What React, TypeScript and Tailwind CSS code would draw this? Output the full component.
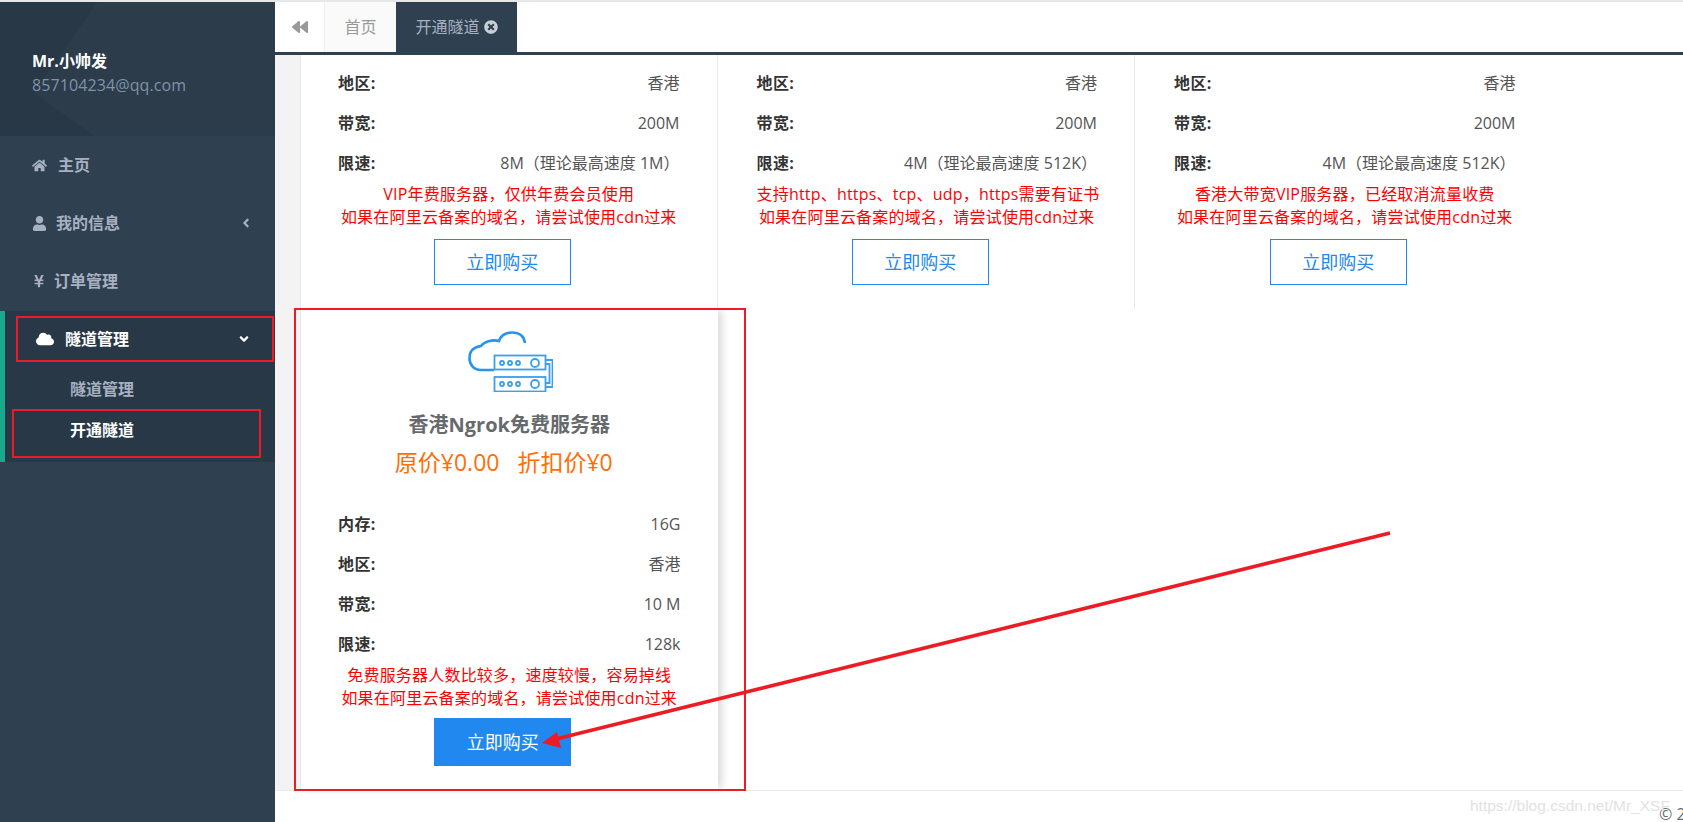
import React from "react";
import { FaHome, FaUser, FaYenSign, FaCloud, FaAngleLeft, FaAngleDown, FaBackward, FaTimesCircle } from "react-icons/fa";

type Plan = {
  rows: [string, string][];
  lines: [string, string];
};

const ALI = "如果在阿里云备案的域名，请尝试使用cdn过来";

const topPlans: Plan[] = [
  {
    rows: [["地区:", "香港"], ["带宽:", "200M"], ["限速:", "8M（理论最高速度 1M）"]],
    lines: ["VIP年费服务器，仅供年费会员使用", ALI],
  },
  {
    rows: [["地区:", "香港"], ["带宽:", "200M"], ["限速:", "4M（理论最高速度 512K）"]],
    lines: ["支持http、https、tcp、udp，https需要有证书", ALI],
  },
  {
    rows: [["地区:", "香港"], ["带宽:", "200M"], ["限速:", "4M（理论最高速度 512K）"]],
    lines: ["香港大带宽VIP服务器，已经取消流量收费", ALI],
  },
];

const freeRows: [string, string][] = [["内存:", "16G"], ["地区:", "香港"], ["带宽:", "10 M"], ["限速:", "128k"]];

const SpecRows = ({ rows }: { rows: [string, string][] }) => (
  <div className="flex flex-col">
    {rows.map(([label, value]) => (
      <div key={label} className="flex h-10 items-center justify-between">
        <span className="font-bold tracking-[0.4px] text-[#333]">{label}</span>
        <span className="text-[#555]">{value}</span>
      </div>
    ))}
  </div>
);

const Notes = ({ lines }: { lines: [string, string] }) => (
  <div className="text-center text-[16px] leading-[23px] tracking-[0.2px] text-[#ff0000] whitespace-nowrap">
    <p>{lines[0]}</p>
    <p>{lines[1]}</p>
  </div>
);

const CloudServer = () => (
  <svg viewBox="0 0 85 61" className="h-[61px] w-[85px]" fill="none" stroke="#2a93ea">
    <path d="M26 39H13C6 39 1.5 34 1.5 27C1.5 20 6 16 13 15C16 11 24 8 31 10C33 4 38 1.5 44 1.5C51 1.5 56 5 57 12" strokeWidth="2.6" />
    <g strokeWidth="1.8" stroke="#3a9fec">
      <rect x="26.5" y="24.5" width="51" height="14" />
      <rect x="26.5" y="46" width="51" height="14.5" />
      <circle cx="34" cy="32" r="2" />
      <circle cx="42" cy="32" r="2" />
      <circle cx="50" cy="32" r="2" />
      <circle cx="67" cy="32" r="4" />
      <circle cx="34" cy="53" r="2" />
      <circle cx="42" cy="53" r="2" />
      <circle cx="50" cy="53" r="2" />
      <circle cx="67" cy="53" r="4" />
      <path d="M78 29H84.5V56H78M78 33H81.5V52H78" />
    </g>
  </svg>
);

const MenuItem = ({ icon, label, gap, arrow }: { icon: React.ReactNode; label: string; gap: string; arrow?: boolean }) => (
  <div className="flex h-[58px] items-center pl-8 pr-[22px] font-bold text-[#a7b1c2]">
    <span className="flex items-center">{icon}</span>
    <span className={gap}>{label}</span>
    {arrow && <FaAngleLeft className="ml-auto text-[14px]" />}
  </div>
);

const Sidebar = () => (
  <aside className="flex w-[275px] shrink-0 flex-col bg-[#2f4050]">
    <div className="relative h-[134px] overflow-hidden bg-[#293846] pl-8 pt-[47px]">
      <div className="absolute -right-10 -top-10 h-[220px] w-[240px] rotate-[35deg] bg-[#2c3c4b]" />
      <p className="relative font-bold leading-6 text-white">Mr.小帅发</p>
      <p className="relative leading-6 tracking-[0.1px] text-[#7f93a9]">857104234@qq.com</p>
    </div>
    <MenuItem icon={<FaHome className="text-[15px]" />} label="主页" gap="ml-[11px]" />
    <MenuItem icon={<FaUser className="text-[15px]" />} label="我的信息" gap="ml-[9px]" arrow />
    <MenuItem icon={<FaYenSign className="text-[14px]" />} label="订单管理" gap="ml-[8px]" />
    <div className="mt-px h-[151px] border-l-[5px] border-[#19aa8d] bg-[#293846]">
      <div className="flex h-[56px] items-center pl-[31px] pr-[24px] font-bold text-white">
        <FaCloud className="text-[18px]" />
        <span className="ml-[11px]">隧道管理</span>
        <FaAngleDown className="ml-auto text-[14px]" />
      </div>
      <p className="mt-[2px] pl-[65px] font-bold leading-[40px] text-[#a7b1c2]">隧道管理</p>
      <p className="pl-[65px] pt-px font-bold leading-[40px] text-white">开通隧道</p>
    </div>
  </aside>
);

const TabBar = () => (
  <div className="flex h-[53px] shrink-0 border-b-[3px] border-[#2f4050] bg-white">
    <div className="flex w-[49px] items-center justify-center text-[#999]">
      <FaBackward className="text-[16px]" />
    </div>
    <div className="flex w-[72px] items-center justify-center border-l border-[#eee] bg-[#fafafa] text-[#999]">首页</div>
    <div className="flex w-[121px] items-center justify-center gap-[4px] bg-[#2f4050] text-[#a7b1c2]">
      开通隧道
      <FaTimesCircle className="text-[14px] text-[#c8ced8]" />
    </div>
  </div>
);

const App = () => {
  return (
    <div className="relative flex h-[822px] w-[1683px] overflow-hidden bg-white pt-[2px] font-['Open_Sans','Noto_Sans_CJK_SC',sans-serif] text-[16px] text-[#676a6c]">
      <div className="absolute inset-x-0 top-0 h-[2px] bg-[#e7e7e7]" />
      <Sidebar />
      <main className="flex min-w-0 flex-1 flex-col">
        <TabBar />
        <div className="flex h-[735px] shrink-0 bg-[#f3f3f4] pl-[25px]">
          <div className="flex-1 bg-white">
            <div className="flex h-[254px]">
              {topPlans.map((plan, i) => (
                <div
                  key={i}
                  className="flex h-full w-[417.5px] shrink-0 flex-col border-r border-[#e7eaec] pl-[39px] pr-[37px] pt-2 first:border-l first:pl-[37px] last:border-r-0"
                >
                  <SpecRows rows={plan.rows} />
                  <Notes lines={plan.lines} />
                  <button className="mr-[13px] mt-[10px] h-[46px] w-[137px] self-center border border-[#2088ee] text-[18px] text-[#2088ee]">
                    立即购买
                  </button>
                </div>
              ))}
            </div>
            <div className="flex h-[481px] w-[417.5px] flex-col items-stretch border-l border-[#e7eaec] pl-[37px] pr-[37px] pt-[22px] shadow-[6px_0_8px_-2px_rgba(0,0,0,0.15)]">
              <div className="flex justify-center pl-[3px]">
                <CloudServer />
              </div>
              <h3 className="mt-[19px] text-center text-[20px] font-bold leading-7 text-[#676a6c]">香港Ngrok免费服务器</h3>
              <p className="mt-[7px] whitespace-pre pr-[11px] text-center text-[23px] leading-8 text-[#ff6e07]">原价¥0.00   折扣价¥0</p>
              <div className="mt-[26px]">
                <SpecRows rows={freeRows} />
              </div>
              <Notes lines={["免费服务器人数比较多，速度较慢，容易掉线", ALI]} />
              <button className="mr-[13px] mt-2 h-12 w-[137px] self-center bg-[#2088ee] text-[18px] text-white">立即购买</button>
            </div>
          </div>
        </div>
        <div className="flex-1 overflow-hidden border-t border-[#e7eaec] pl-[1384px] pt-[11px] text-[#676a6c]">
          <span className="whitespace-nowrap">© 2</span>
        </div>
      </main>

      {/* annotations drawn on top of the screenshot */}
      <div className="absolute left-[16px] top-[316px] h-[46px] w-[258px] border-2 border-[#ed1c24]" />
      <div className="absolute left-[12px] top-[409px] h-[49px] w-[249px] border-2 border-[#ed1c24]" />
      <div className="absolute left-[294px] top-[308px] h-[483px] w-[452px] border-2 border-[#ed1c24]" />
      <svg className="pointer-events-none absolute left-0 top-0" width="1683" height="822">
        <line x1="1390" y1="533" x2="556" y2="739" stroke="#ed1c24" strokeWidth="3.5" />
        <polygon points="542,743 557,732 561,748" fill="#ed1c24" />
      </svg>
      <span className="absolute left-[1470px] top-[794px] font-['Liberation_Sans',sans-serif] text-[15.5px] text-[#e2e2e2]">
        https://blog.csdn.net/Mr_XSF
      </span>
    </div>
  );
};

export default App;
